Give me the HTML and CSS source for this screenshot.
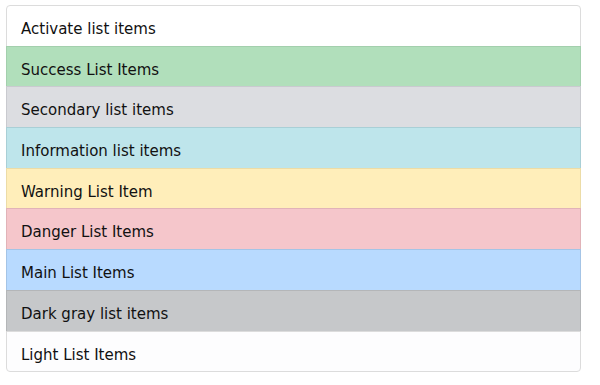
FILE: index.html
```html
<!DOCTYPE html>
<html lang="en">
<head>
  <meta charset="UTF-8">
  <meta name="viewport" content="width=device-width, initial-scale=1.0">
  <title>List group</title>
  <link rel="stylesheet" href="styles.css">
</head>
<body>
  <ul class="list-group">
    <li class="list-item">Activate list items</li>
    <li class="list-item item-success">Success List Items</li>
    <li class="list-item item-secondary">Secondary list items</li>
    <li class="list-item item-info">Information list items</li>
    <li class="list-item item-warning">Warning List Item</li>
    <li class="list-item item-danger">Danger List Items</li>
    <li class="list-item item-primary">Main List Items</li>
    <li class="list-item item-dark">Dark gray list items</li>
    <li class="list-item item-light">Light List Items</li>
  </ul>
</body>
</html>
```

FILE: styles.css
```css
body {
  font-family: "DejaVu Sans", Verdana, sans-serif;
  font-size: 15px;
  color: #111;
  background: #fff;
  margin: 0;
  padding: 5px 0 0 6px;
}
.list-group {
  list-style: none;
  margin: 0;
  padding: 0;
  width: 575px;
  display: flex;
  flex-direction: column;
}
.list-item {
  line-height: 18px;
  padding: 14px 14px 7.7px;
  background: #fff;
  border: 1px solid #dcdcdc;
  margin-bottom: -1px;
}
.list-item:first-child {
  border-radius: 4px 4px 0 0;
}
.list-item:last-child {
  border-radius: 0 0 4px 4px;
  margin-bottom: 0;
}
.item-success {
  background: #b1dfbb;
  border-color: #a3cfad;
}
.item-secondary {
  background: #dcdde1;
  border-color: #c9cacf;
}
.item-info {
  background: #bee5eb;
  border-color: #a9cfd6;
}
.item-warning {
  background: #ffeeba;
  border-color: #ecdca7;
}
.item-danger {
  background: #f5c6cb;
  border-color: #e1b3b8;
}
.item-primary {
  background: #b8daff;
  border-color: #a4c4e6;
}
.item-dark {
  background: #c6c8ca;
  border-color: #b4b6b8;
}
.item-light {
  background: #fdfdfe;
  border-color: #dcdcdc;
}
```
